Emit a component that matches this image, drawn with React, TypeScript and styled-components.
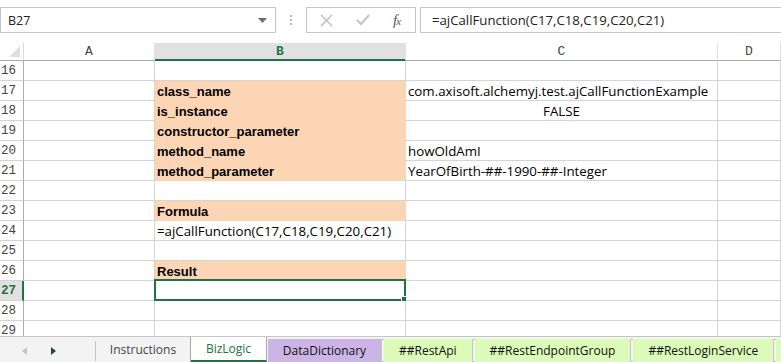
import React from "react";
import styled, { createGlobalStyle, css } from "styled-components";

const GREEN = "#217346";
const PEACH = "#fcd5b4";
const GRID = "#d4d4d4";

const GlobalStyle = createGlobalStyle`
  html, body {
    margin: 0;
    padding: 0;
    background: #ffffff;
    overflow: hidden;
  }
  body {
    font-family: "Liberation Sans", Arial, sans-serif;
  }
`;

type CellData = {
  text?: string;
  bold?: boolean;
  fill?: string;
  center?: boolean;
};

type RowData = {
  n: number;
  b?: CellData;
  c?: CellData;
  selected?: boolean;
};

const rows: RowData[] = [
  { n: 16 },
  {
    n: 17,
    b: { text: "class_name", bold: true, fill: PEACH },
    c: { text: "com.axisoft.alchemyj.test.ajCallFunctionExample" },
  },
  { n: 18, b: { text: "is_instance", bold: true, fill: PEACH }, c: { text: "FALSE", center: true } },
  { n: 19, b: { text: "constructor_parameter", bold: true, fill: PEACH } },
  { n: 20, b: { text: "method_name", bold: true, fill: PEACH }, c: { text: "howOldAmI" } },
  {
    n: 21,
    b: { text: "method_parameter", bold: true, fill: PEACH },
    c: { text: "YearOfBirth-##-1990-##-Integer" },
  },
  { n: 22 },
  { n: 23, b: { text: "Formula", bold: true, fill: PEACH } },
  { n: 24, b: { text: "=ajCallFunction(C17,C18,C19,C20,C21)" } },
  { n: 25 },
  { n: 26, b: { text: "Result", bold: true, fill: PEACH } },
  { n: 27, selected: true },
  { n: 28 },
  { n: 29 },
];

const tabs = [
  { name: "Instructions", kind: "plain" },
  { name: "BizLogic", kind: "active" },
  { name: "DataDictionary", kind: "purple" },
  { name: "##RestApi", kind: "green" },
  { name: "##RestEndpointGroup", kind: "green" },
  { name: "##RestLoginService", kind: "green" },
  { name: "", kind: "green" },
];

const App = () => {
  return (
    <Page>
      <GlobalStyle />
      <FormulaBar>
        <NameBox>
          <span>B27</span>
          <svg width="9" height="5" viewBox="0 0 9 5">
            <path d="M0 0 L9 0 L4.5 5 Z" fill="#6d6d6d" />
          </svg>
        </NameBox>
        <Grip>
          <i />
          <i />
          <i />
        </Grip>
        <IconBox>
          <svg width="13" height="13" viewBox="0 0 13 13">
            <path d="M1 1 L12 12 M12 1 L1 12" stroke="#bdbdbd" strokeWidth="1.4" />
          </svg>
          <svg width="14" height="12" viewBox="0 0 14 12">
            <path d="M1 6 L5 10 L13 1" stroke="#c4c4c4" strokeWidth="2" fill="none" />
          </svg>
          <Fx>
            f<small>x</small>
          </Fx>
        </IconBox>
        <FormulaInput>=ajCallFunction(C17,C18,C19,C20,C21)</FormulaInput>
      </FormulaBar>

      <Sheet>
        <Grid>
          <Corner>
            <svg width="11" height="11" viewBox="0 0 11 11">
              <path d="M11 0 L11 11 L0 11 Z" fill="#dfdfdf" />
            </svg>
          </Corner>
          <ColHeader>A</ColHeader>
          <ColHeader selected>B</ColHeader>
          <ColHeader>C</ColHeader>
          <ColHeader>D</ColHeader>

          {rows.map((r) => (
            <React.Fragment key={r.n}>
              <RowHeader selected={r.selected}>{r.n}</RowHeader>
              <Cell />
              <Cell fill={r.b?.fill} bold={r.b?.bold} center={r.b?.center}>
                {r.b?.text}
                {r.selected && (
                  <Selection>
                    <Handle />
                  </Selection>
                )}
              </Cell>
              <Cell fill={r.c?.fill} bold={r.c?.bold} center={r.c?.center}>
                {r.c?.text}
              </Cell>
              <Cell />
            </React.Fragment>
          ))}
        </Grid>
      </Sheet>

      <TabBar>
        <TabNav>
          <svg width="5" height="8" viewBox="0 0 5 8">
            <path d="M5 0 L5 8 L0 4 Z" fill="#c3c3c3" />
          </svg>
          <svg width="5" height="8" viewBox="0 0 5 8">
            <path d="M0 0 L0 8 L5 4 Z" fill="#1e4d34" />
          </svg>
        </TabNav>
        {tabs.map((t, i) => (
          <Tab key={i} kind={t.kind}>
            {t.name}
          </Tab>
        ))}
      </TabBar>
    </Page>
  );
};

const Page = styled.div`
  width: 781px;
  height: 362px;
  display: flex;
  flex-direction: column;
  overflow: hidden;
  background: #fff;
`;

const FormulaBar = styled.div`
  height: 43px;
  box-sizing: border-box;
  padding-top: 7px;
  display: flex;
  align-items: flex-start;
`;

const boxed = css`
  height: 26px;
  box-sizing: border-box;
  border: 1px solid #c6c6c6;
  background: #fff;
`;

const NameBox = styled.div`
  ${boxed};
  width: 276px;
  display: flex;
  align-items: center;
  justify-content: space-between;
  padding: 0 8px 0 7px;
  font-family: "Open Sans", "Liberation Sans", sans-serif;
  font-size: 12.5px;
  color: #222;
`;

const Grip = styled.div`
  width: 30px;
  height: 26px;
  display: flex;
  flex-direction: column;
  align-items: center;
  justify-content: center;
  gap: 2px;

  i {
    display: block;
    width: 2px;
    height: 2px;
    background: #b8b8b8;
  }
`;

const IconBox = styled.div`
  ${boxed};
  width: 110px;
  display: flex;
  align-items: center;
  padding-left: 13px;
  gap: 23px;
`;

const Fx = styled.span`
  font-family: "Liberation Serif", "Times New Roman", serif;
  font-style: italic;
  font-size: 15px;
  color: #555;
  letter-spacing: -1px;

  small {
    font-size: 11px;
  }
`;

const FormulaInput = styled.div`
  ${boxed};
  flex: 1;
  margin-left: 4px;
  border-right: none;
  padding-left: 11px;
  line-height: 24px;
  font-family: "Open Sans", "Liberation Sans", sans-serif;
  font-size: 13.2px;
  color: #222;
  white-space: nowrap;
`;

const Sheet = styled.div`
  height: 293px;
  overflow: hidden;
`;

const Grid = styled.div`
  display: grid;
  grid-template-columns: 24px 131px 251px 312px 1fr;
  grid-auto-rows: 20px;
  grid-template-rows: 18px;
`;

const Corner = styled.div`
  box-sizing: border-box;
  border-right: 1px solid #dadada;
  border-bottom: 1px solid #ababab;
  display: flex;
  align-items: flex-end;
  justify-content: flex-end;
  padding: 0 3px 3px 0;
`;

const ColHeader = styled.div<{ selected?: boolean }>`
  box-sizing: border-box;
  border-right: 1px solid #e2e2e2;
  border-bottom: 1px solid ${(p) => (p.selected ? GREEN : "#ababab")};
  box-shadow: ${(p) => (p.selected ? `inset 0 -1px 0 ${GREEN}` : "none")};
  background: ${(p) => (p.selected ? "#e1e1e1" : "#fff")};
  color: ${(p) => (p.selected ? GREEN : "#444")};
  font-family: "Liberation Mono", "Courier New", monospace;
  font-weight: ${(p) => (p.selected ? "bold" : "normal")};
  font-size: 13px;
  line-height: 18px;
  text-align: center;
`;

const RowHeader = styled.div<{ selected?: boolean }>`
  box-sizing: border-box;
  border-bottom: 1px solid ${GRID};
  border-right: ${(p) => (p.selected ? `2px solid ${GREEN}` : "1px solid #ababab")};
  background: ${(p) => (p.selected ? "#e1e1e1" : "#fff")};
  color: ${(p) => (p.selected ? GREEN : "#444")};
  font-family: "Liberation Mono", "Courier New", monospace;
  font-weight: ${(p) => (p.selected ? "bold" : "normal")};
  font-size: 12.5px;
  line-height: 20px;
  padding-left: 1px;
`;

const Cell = styled.div<{ fill?: string; bold?: boolean; center?: boolean }>`
  position: relative;
  box-sizing: border-box;
  border-right: 1px solid ${(p) => p.fill || GRID};
  border-bottom: 1px solid ${(p) => p.fill || GRID};
  background: ${(p) => p.fill || "#fff"};
  font-family: ${(p) =>
    p.bold ? `"Liberation Sans", Arial, sans-serif` : `"Open Sans", "Liberation Sans", sans-serif`};
  font-size: ${(p) => (p.bold ? "13px" : "13.3px")};
  font-weight: ${(p) => (p.bold ? "bold" : "normal")};
  text-align: ${(p) => (p.center ? "center" : "left")};
  color: #000;
  padding: 1px 2px 0;
  line-height: 19px;
  white-space: nowrap;
`;

const Selection = styled.div`
  position: absolute;
  left: -1px;
  top: -2px;
  right: -1px;
  bottom: -1px;
  border: 2px solid ${GREEN};
`;

const Handle = styled.div`
  position: absolute;
  right: -4px;
  bottom: -4px;
  width: 5px;
  height: 5px;
  background: ${GREEN};
  border: 1px solid #fff;
`;

const TabBar = styled.div`
  height: 26px;
  box-sizing: border-box;
  border-top: 1px solid #c6c6c6;
  background: #f3f3f3;
  display: flex;
  align-items: stretch;
  overflow: hidden;
  font-family: "Open Sans", "Liberation Sans", sans-serif;
  font-size: 12px;
`;

const TabNav = styled.div`
  width: 96px;
  flex-shrink: 0;
  box-sizing: border-box;
  border-right: 1px solid #c6c6c6;
  margin: 4px 0 1px;
  display: flex;
  align-items: center;
  padding-left: 22px;
  gap: 24px;
`;

const tabKinds: Record<string, ReturnType<typeof css>> = {
  plain: css`
    width: 95px;
    color: #444;
    border-right: 1px solid #a8a8a8;
  `,
  active: css`
    width: 76px;
    margin-top: -1px;
    background: #fff;
    color: ${GREEN};
    border-bottom: 2px solid ${GREEN};
    border-right: 1px solid #a8a8a8;
  `,
  purple: css`
    width: 113px;
    margin: 2px 0 0 1px;
    background: #cdb4e6;
    color: #111;
  `,
  green: css`
    margin: 2px 0 0 3px;
    padding: 0 15px;
    min-width: 30px;
    background: #dcfab8;
    color: #111;
    box-shadow: -3px 0 0 -1px #f3f3f3, -3px 0 0 0 #c6c6c6;
  `,
};

const Tab = styled.div<{ kind: string }>`
  flex-shrink: 0;
  box-sizing: border-box;
  display: flex;
  align-items: center;
  justify-content: center;
  white-space: nowrap;
  ${(p) => tabKinds[p.kind]};
`;

export default App;
